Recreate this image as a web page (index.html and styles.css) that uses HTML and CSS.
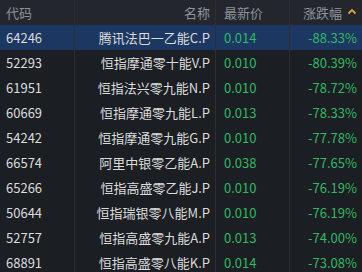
FILE: index.html
```html
<!DOCTYPE html>
<html>
<head>
<meta charset="utf-8">
<link rel="stylesheet" href="styles.css">
</head>
<body>
<div class="table">
  <div class="row head">
    <div class="c code">代码</div>
    <div class="c name">名称</div>
    <div class="c price">最新价</div>
    <div class="c chg">涨跌幅<svg class="caret" width="10" height="7" viewBox="0 0 10 7"><path d="M1.5 5.5 L5 2 L8.5 5.5" fill="none" stroke="#e0a23a" stroke-width="1.8"/></svg></div>
  </div>
  <div class="row sel">
    <div class="c code">64246</div><div class="c name">腾讯法巴一乙能C.P</div><div class="c price g">0.014</div><div class="c chg g">-88.33%</div>
  </div>
  <div class="row">
    <div class="c code">52293</div><div class="c name">恒指摩通零十能V.P</div><div class="c price g">0.010</div><div class="c chg g">-80.39%</div>
  </div>
  <div class="row">
    <div class="c code">61951</div><div class="c name">恒指法兴零九能N.P</div><div class="c price g">0.010</div><div class="c chg g">-78.72%</div>
  </div>
  <div class="row">
    <div class="c code">60669</div><div class="c name">恒指摩通零九能L.P</div><div class="c price g">0.013</div><div class="c chg g">-78.33%</div>
  </div>
  <div class="row">
    <div class="c code">54242</div><div class="c name">恒指摩通零九能G.P</div><div class="c price g">0.010</div><div class="c chg g">-77.78%</div>
  </div>
  <div class="row">
    <div class="c code">66574</div><div class="c name">阿里中银零乙能A.P</div><div class="c price g">0.038</div><div class="c chg g">-77.65%</div>
  </div>
  <div class="row">
    <div class="c code">65266</div><div class="c name">恒指高盛零乙能J.P</div><div class="c price g">0.010</div><div class="c chg g">-76.19%</div>
  </div>
  <div class="row">
    <div class="c code">50644</div><div class="c name">恒指瑞银零八能M.P</div><div class="c price g">0.010</div><div class="c chg g">-76.19%</div>
  </div>
  <div class="row">
    <div class="c code">52757</div><div class="c name">恒指高盛零九能A.P</div><div class="c price g">0.013</div><div class="c chg g">-74.00%</div>
  </div>
  <div class="row">
    <div class="c code">68891</div><div class="c name">恒指高盛零八能K.P</div><div class="c price g">0.014</div><div class="c chg g">-73.08%</div>
  </div>
</div>
</body>
</html>
```
FILE: styles.css
```css
html, body {
  margin: 0;
  padding: 0;
  background: #1b1e23;
}
body {
  width: 362px;
  height: 272px;
  overflow: hidden;
  font-family: "Noto Sans CJK SC", "Noto Sans", sans-serif;
  font-size: 13px;
  color: #dcdcdc;
}
.table {
  display: flex;
  flex-direction: column;
}
.row {
  display: grid;
  grid-template-columns: 75px 141px 74px 72px;
  height: 25px;
  border-bottom: 0 solid #23272d;
}
.row.head {
  background: #23272d;
  color: #8e939b;
}
.row.sel {
  background: #1c3761;
}
.c {
  display: flex;
  align-items: center;
  white-space: nowrap;
  border-right: 1px solid #2a2e35;
  line-height: 1;
}
.c:last-child {
  border-right: none;
}
.code {
  padding-left: 6px;
}
.name {
  justify-content: flex-end;
  padding-right: 5px;
}
.price {
  padding-left: 8px;
}
.chg {
  justify-content: flex-end;
  padding-right: 5px;
}
.head .chg {
  padding-right: 5px;
}
.caret {
  margin-left: 5px;
  margin-bottom: 2px;
}
.g {
  color: #33b863;
}
```
